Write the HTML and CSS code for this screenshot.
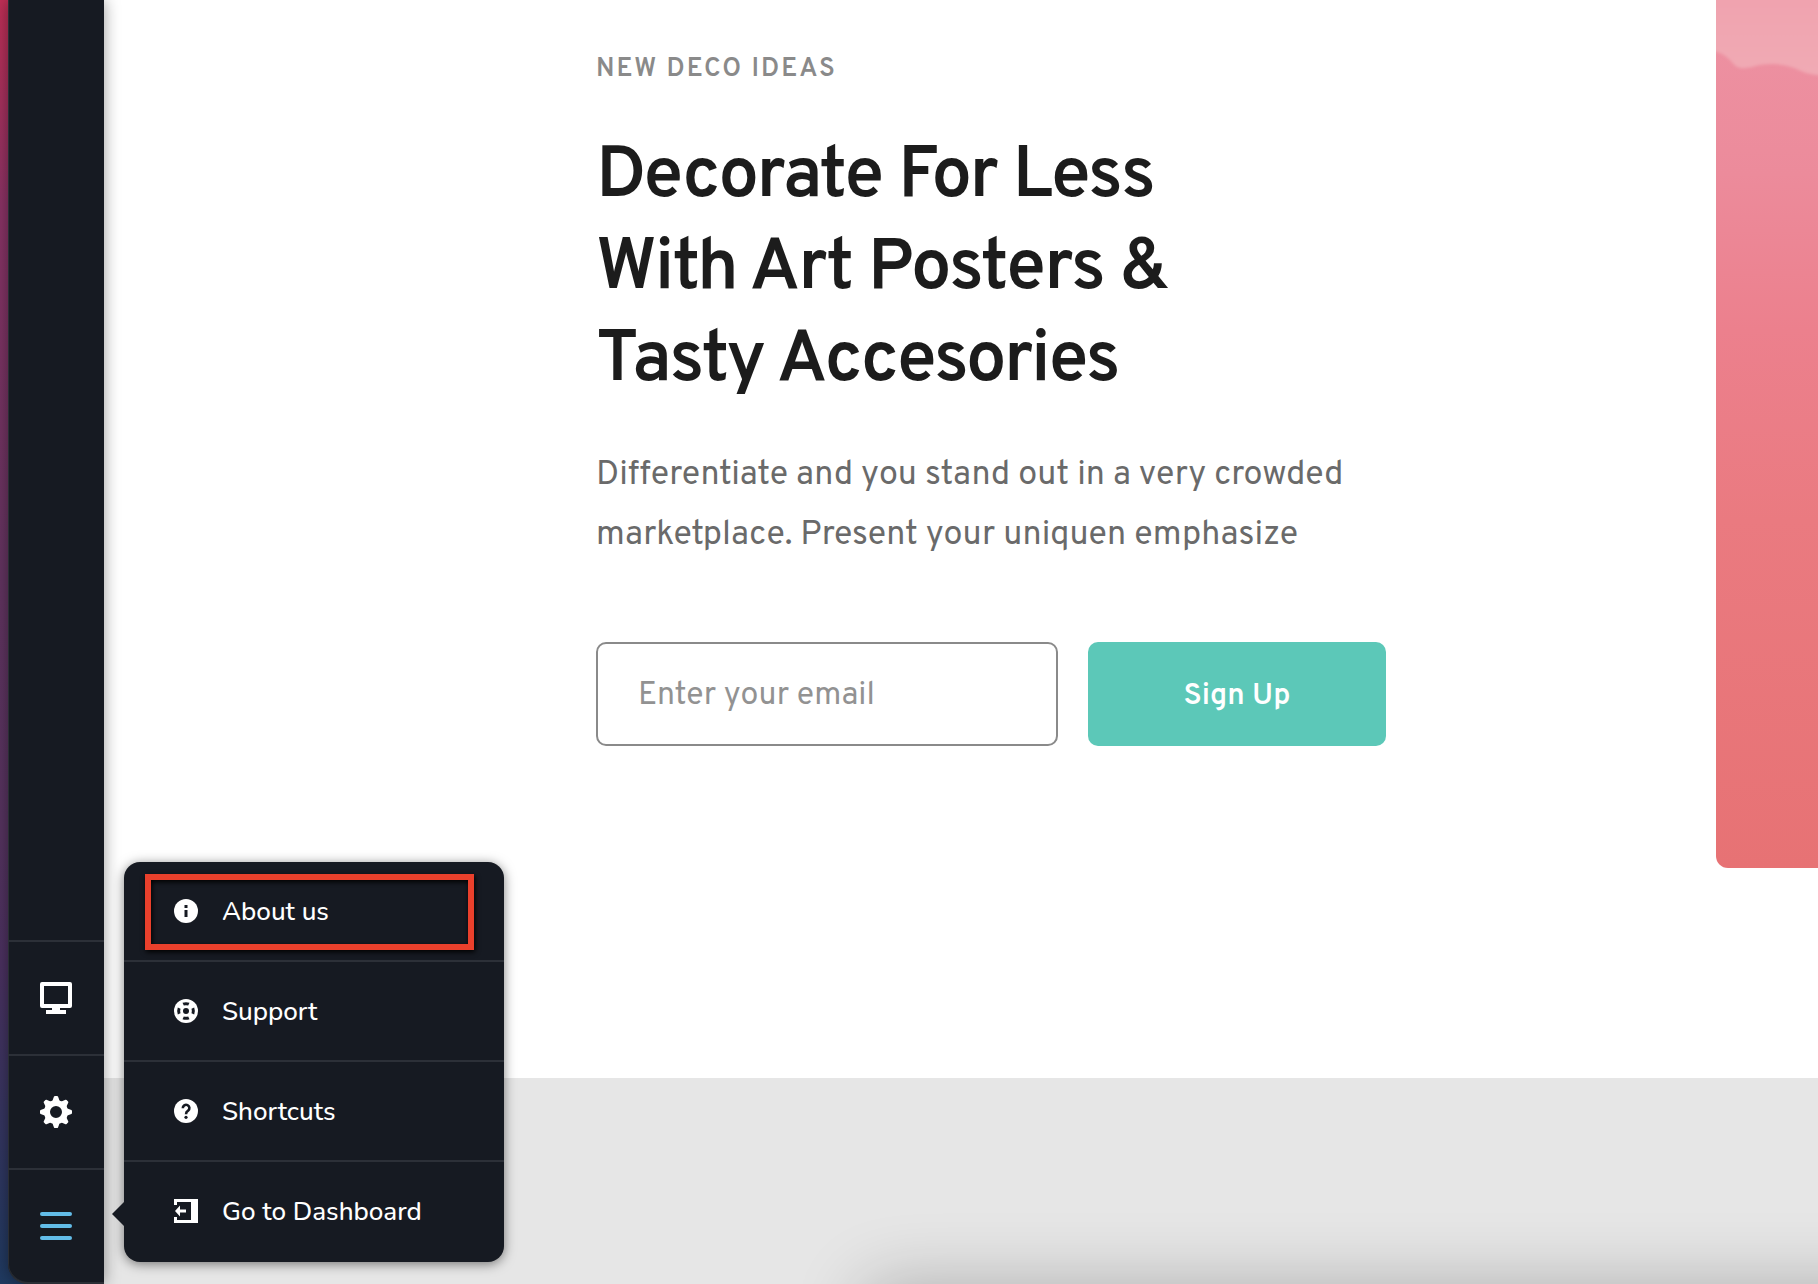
FILE: index.html
```html
<!DOCTYPE html>
<html lang="en">
<head>
<meta charset="utf-8">
<title>Decorate For Less</title>
<link rel="stylesheet" href="styles.css">
</head>
<body>
<div class="desktop">
  <nav class="sidebar" aria-label="Editor">
    <button class="tool" aria-label="Preview">
      <svg width="32" height="32" viewBox="0 0 32 32" fill="#fff"><path fill-rule="evenodd" d="M2 0h28a2 2 0 0 1 2 2v22a2 2 0 0 1-2 2H20v2h6v4H6v-4h6v-2H2a2 2 0 0 1-2-2V2a2 2 0 0 1 2-2zm2 4v18h24V4z"/></svg>
    </button>
    <button class="tool" aria-label="Settings">
      <svg width="32" height="32" viewBox="0 0 32 32" fill="none" stroke="#fff"><circle cx="16" cy="16" r="9" stroke-width="6"/><g fill="#fff" stroke="none"><path id="tooth" d="M12 6 14 .6q.3-.6 1-.6h2q.7 0 1 .6L20 6z"/><use href="#tooth" transform="rotate(45 16 16)"/><use href="#tooth" transform="rotate(90 16 16)"/><use href="#tooth" transform="rotate(135 16 16)"/><use href="#tooth" transform="rotate(180 16 16)"/><use href="#tooth" transform="rotate(225 16 16)"/><use href="#tooth" transform="rotate(270 16 16)"/><use href="#tooth" transform="rotate(315 16 16)"/></g></svg>
    </button>
    <button class="tool" aria-label="Menu" aria-expanded="true">
      <svg width="32" height="28" viewBox="0 0 32 28" fill="#62bce8"><rect width="32" height="4" rx="2"/><rect y="12" width="32" height="4" rx="2"/><rect y="24" width="32" height="4" rx="2"/></svg>
    </button>
    <div class="menu">
      <a class="menu-item" href="#about">
        <svg width="24" height="24" viewBox="0 0 24 24"><circle cx="12" cy="12" r="12" fill="#fff"/><path d="M10.500 6h3v3h-3zM10.500 11h3v7h-3z" fill="#161a22"/></svg>
        About us
      </a>
      <a class="menu-item" href="#support">
        <svg width="24" height="24" viewBox="0 0 24 24"><circle cx="12" cy="12" r="12" fill="#fff"/><g fill="#161a22"><path id="slot" d="M8.500 3.800q3.500-1.300 7 0L14.200 6.500q-2.200-.7-4.400 0z"/><use href="#slot" transform="rotate(90 12 12)"/><use href="#slot" transform="rotate(180 12 12)"/><use href="#slot" transform="rotate(270 12 12)"/><circle cx="12" cy="12" r="3"/></g></svg>
        Support
      </a>
      <a class="menu-item" href="#shortcuts">
        <svg width="24" height="24" viewBox="0 0 24 24"><circle cx="12" cy="12" r="12" fill="#fff"/><path d="M8.800 9.200a3.300 3.300 0 1 1 5.300 2.500Q12 13 12 15.200" fill="none" stroke="#161a22" stroke-width="2.600"/><circle cx="12" cy="18.300" r="1.600" fill="#161a22"/></svg>
        Shortcuts
      </a>
      <a class="menu-item" href="#dashboard">
        <svg width="24" height="24" viewBox="0 0 24 24" fill="#fff"><path d="M0 0h24v24H0v-6h3v3h14V3H3v3H0z"/><path d="M1 12l5-5.500V10.500h6v3H6v4z"/></svg>
        Go to Dashboard
      </a>
      <span class="highlight"></span>
    </div>
  </nav>
  <main class="canvas">
    <section class="hero">
      <div class="copy">
        <p class="eyebrow">NEW DECO IDEAS</p>
        <h1 class="title">Decorate For Less<br>With Art Posters &amp;<br>Tasty Accesories</h1>
        <p class="lead">Differentiate and you stand out in a very crowded<br>marketplace. Present your uniquen emphasize</p>
        <form class="signup">
          <input class="email" type="email" placeholder="Enter your email" aria-label="Email">
          <button class="submit" type="button">Sign Up</button>
        </form>
      </div>
      <svg class="art" viewBox="0 0 102 868" preserveAspectRatio="none" aria-hidden="true">
        <defs>
          <linearGradient id="rose" x1="0" y1="0" x2="0" y2="1"><stop offset="0" stop-color="#ed92a3"/><stop offset=".2" stop-color="#ec8b9b"/><stop offset=".38" stop-color="#ec808d"/><stop offset=".6" stop-color="#ea7a80"/><stop offset="1" stop-color="#e77274"/></linearGradient>
          <linearGradient id="sky" x1="0" y1="0" x2="0" y2="1"><stop offset="0" stop-color="#f0a2ae"/><stop offset="1" stop-color="#f0aab4"/></linearGradient>
          <filter id="soft"><feGaussianBlur stdDeviation="1.500"/></filter>
        </defs>
        <path fill="url(#rose)" d="M0 0H102V868H0z"/>
        <path fill="url(#sky)" filter="url(#soft)" d="M-10-10H112V76C90 75 86 71 78 68C66 63 48 63 36 67C22 70 20 67 14 60C8 54 4 52-10 49z"/>
      </svg>
    </section>
    <section class="band"><div class="dock"></div></section>
  </main>
</div>
</body>
</html>
```
FILE: styles.css
```css
* { box-sizing: border-box; }
body {
  margin: 0;
  font-family: Overpass, Roboto, sans-serif;
  background: #fff;
}
.desktop {
  display: flex;
  min-height: 100vh;
  padding-left: 8px;
  background: linear-gradient(#c02f56, #8a3365 16%, #623460 45%, #55335f 65%, #4b3160 75%, #1f3a60) left / 40px 100% no-repeat;
}
.sidebar {
  position: relative;
  z-index: 1;
  display: flex;
  flex: none;
  flex-direction: column;
  justify-content: flex-end;
  width: 96px;
  background: #161a22;
  border-bottom: 2px solid #2a2e35;
  border-bottom-left-radius: 20px;
  box-shadow: inset 1px 0 #2a2e35, 0 0 16px rgba(0, 0, 0, .4);
}
.tool {
  display: flex;
  align-items: center;
  justify-content: center;
  height: 114px;
  padding: 0;
  background: none;
  border: 0;
  border-top: 2px solid #2c3038;
}
.menu {
  position: absolute;
  left: 116px;
  bottom: 20px;
  width: 380px;
  background: #161a22;
  border-radius: 16px;
  box-shadow: 0 2px 12px rgba(0, 0, 0, .5);
}
.menu::before {
  content: "";
  position: absolute;
  left: -12px;
  bottom: 36px;
  border: 12px solid transparent;
  border-left: 0;
  border-right-color: #161a22;
}
.menu-item {
  display: flex;
  align-items: center;
  gap: 24px;
  height: 100px;
  padding-left: 50px;
  color: #fff;
  font: 500 26px Nunito, "Open Sans", sans-serif;
  text-decoration: none;
  border-bottom: 2px solid #2c3038;
}
.menu-item:last-of-type { border-bottom-color: transparent; }
.highlight {
  position: absolute;
  top: 12px;
  left: 21px;
  width: 329px;
  height: 76px;
  border: 6px solid #ea402c;
  box-shadow: 1px 2px 5px #000, inset 1px 2px 5px #000;
}
.canvas {
  display: flex;
  flex: 1;
  flex-direction: column;
  min-width: 0;
  background: #fff;
}
.hero {
  display: flex;
  justify-content: space-between;
  padding: 0 0 210px 492px;
}
.copy { width: 790px; padding-top: 54px; }
.eyebrow {
  margin: 0 0 46px;
  color: #8a8a8a;
  font-size: 26px;
  font-weight: 600;
  line-height: 32px;
  letter-spacing: 2px;
}
.title {
  margin: 0 0 38px;
  color: #1c1c1c;
  font-size: 72px;
  font-weight: 600;
  line-height: 92px;
  letter-spacing: -2px;
}
.lead {
  margin: 0 0 76px;
  color: #6a6a6a;
  font-size: 34px;
  font-weight: 400;
  line-height: 60px;
}
.signup { display: flex; gap: 30px; }
.email, .submit {
  height: 104px;
  border-radius: 10px;
  font-family: inherit;
}
.email {
  width: 462px;
  padding: 4px 40px 0;
  border: 2px solid #8a8a8a;
  color: #666;
  font-size: 32px;
  font-weight: 400;
}
.email::placeholder { color: #929292; }
.submit {
  width: 298px;
  padding: 4px 0 0;
  border: 0;
  background: #5cc8b8;
  color: #fff;
  font-size: 30px;
  font-weight: 600;
}
.art {
  flex: none;
  width: 102px;
  height: 868px;
  border-bottom-left-radius: 12px;
}
.band {
  position: relative;
  flex: 1;
  overflow: hidden;
  background: #e6e6e6;
}
.dock {
  position: absolute;
  top: 100%;
  left: 760px;
  right: -200px;
  height: 200px;
  border-radius: 20px;
  box-shadow: 0 0 70px rgba(0, 0, 0, .24);
}
```
